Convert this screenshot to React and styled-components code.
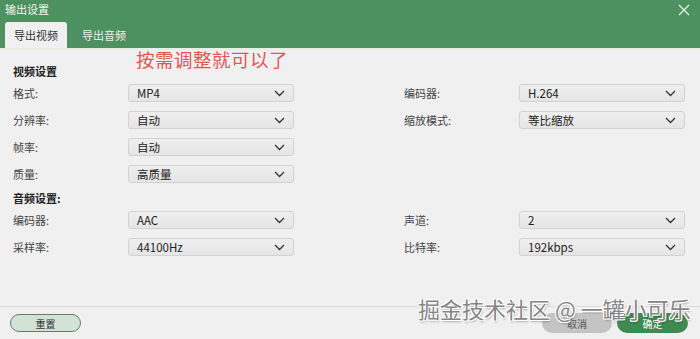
import React from "react"
import styled, { createGlobalStyle } from "styled-components"

const GlobalStyle = createGlobalStyle`
    html, body {
        margin: 0;
        padding: 0;
        background: #f0f0f0;
    }
    body {
        font-family: "Noto Sans CJK SC", "Noto Sans", sans-serif;
    }
`

const Window = styled.div`
    position: relative;
    width: 700px;
    height: 339px;
    display: flex;
    flex-direction: column;
    background: #f0f0f0;
    overflow: hidden;
`

const Header = styled.div`
    height: 48px;
    background: #4e9160;
    display: flex;
    flex-direction: column;
    justify-content: space-between;
`

const TitleRow = styled.div`
    height: 18px;
    display: flex;
    align-items: center;
    justify-content: space-between;
    padding: 0 10px 0 5px;
    color: #eef7ee;
    font-size: 11px;
`

const CloseIcon = styled.svg`
    width: 12px;
    height: 12px;
    margin-top: 1px;
`

const Tabs = styled.div`
    display: flex;
    align-items: flex-end;
    padding-left: 5px;
`

const Tab = styled.div`
    width: ${p => p.active ? "62px" : "auto"};
    height: 26px;
    margin-right: ${p => p.active ? "15px" : "0"};
    display: flex;
    align-items: center;
    justify-content: center;
    font-size: 11px;
    color: ${p => p.active ? "#333" : "#e8f5e8"};
    background: ${p => p.active ? "#f0f0f0" : "transparent"};
    border-radius: 3px 3px 0 0;
`

const Strip = styled.div`
    height: 2px;
    background: #e6efe2;
`

const Body = styled.div`
    flex: 1;
    padding: 14px 0 0 13px;
    display: flex;
    flex-direction: column;
`

const SectionTitle = styled.div`
    height: 14px;
    line-height: 14px;
    font-size: 11px;
    font-weight: bold;
    color: #222;
    margin-top: ${p => p.top || "0"};
`

const Grid = styled.div`
    display: grid;
    grid-template-columns: 115px 166px 110px 115px 166px;
    grid-auto-rows: 18px;
    row-gap: 9px;
    margin-top: 6px;
`

const Label = styled.div`
    grid-column: ${p => p.col};
    display: flex;
    align-items: center;
    font-size: 11px;
    color: #444;
`

const Select = styled.div`
    grid-column: ${p => p.col};
    box-sizing: border-box;
    height: 18px;
    display: flex;
    align-items: center;
    justify-content: space-between;
    padding: 0 8px 0 8px;
    border: 1px solid #d2d2d2;
    border-radius: 3px;
    background: linear-gradient(#efefef, #e5e5e5);
    font-family: "Noto Sans CJK SC", "Liberation Sans", sans-serif;
    font-size: 11.5px;
    color: #222;
`

const Chevron = styled.svg`
    width: 11px;
    height: 7px;
`

const Note = styled.div`
    position: absolute;
    left: 136px;
    top: 46px;
    font-size: 18.5px;
    color: #e05555;
    letter-spacing: 0.5px;
`

const Footer = styled.div`
    height: 32px;
    border-top: 1px solid #dcdcdc;
    display: flex;
    align-items: center;
    padding: 0 12px 0 10px;
    gap: 5px;
`

const Button = styled.div`
    box-sizing: border-box;
    width: ${p => p.w || "70px"};
    height: ${p => p.h || "20px"};
    border-radius: 10px;
    display: flex;
    align-items: center;
    justify-content: center;
    font-size: 10px;
    color: ${p => p.color || "#fff"};
    background: ${p => p.bg};
    border: ${p => p.border || "none"};
    margin-left: ${p => p.push ? "auto" : "0"};
`

const Watermark = styled.div`
    position: absolute;
    left: 418px;
    top: 292px;
    font-size: 22px;
    color: #858585;
    white-space: nowrap;
    text-shadow: 1px 1px 0 #fff, -1px -1px 0 #fff, 1px -1px 0 #fff, -1px 1px 0 #fff, 1px 2px 2px rgba(0, 0, 0, 0.3);
`

const Arrow = () => (
    <Chevron viewBox="0 0 11 7">
        <path d="M1 1l4.5 4.5L10 1" fill="none" stroke="#333" strokeWidth="1.3" />
    </Chevron>
)

const Field = ({ label, value, right }) => (
    <>
        <Label col={right ? 4 : 1}>{label}</Label>
        <Select col={right ? 5 : 2}>
            <span>{value}</span>
            <Arrow />
        </Select>
    </>
)

export default function App() {
    return (
        <Window>
            <GlobalStyle />
            <Header>
                <TitleRow>
                    <span>输出设置</span>
                    <CloseIcon viewBox="0 0 12 12">
                        <path d="M1 1l10 10M11 1L1 11" stroke="#e8f5e8" strokeWidth="1.2" />
                    </CloseIcon>
                </TitleRow>
                <Tabs>
                    <Tab active>导出视频</Tab>
                    <Tab>导出音频</Tab>
                </Tabs>
            </Header>
            <Strip />
            <Body>
                <SectionTitle>视频设置</SectionTitle>
                <Grid>
                    <Field label="格式:" value="MP4" />
                    <Field right label="编码器:" value="H.264" />
                    <Field label="分辨率:" value="自动" />
                    <Field right label="缩放模式:" value="等比缩放" />
                    <Field label="帧率:" value="自动" />
                    <Field label="质量:" value="高质量" />
                </Grid>
                <SectionTitle top="8px">音频设置:</SectionTitle>
                <Grid>
                    <Field label="编码器:" value="AAC" />
                    <Field right label="声道:" value="2" />
                    <Field label="采样率:" value="44100Hz" />
                    <Field right label="比特率:" value="192kbps" />
                </Grid>
            </Body>
            <Footer>
                <Button w="71px" h="18px" bg="#d3e2d6" color="#333" border="1px solid #6a7a6e">重置</Button>
                <Button push bg="#c4c4c4" color="#555">取消</Button>
                <Button w="71px" bg="#3f8a51">确定</Button>
            </Footer>
            <Note>按需调整就可以了</Note>
            <Watermark>掘金技术社区 @ 一罐小可乐</Watermark>
        </Window>
    )
}
